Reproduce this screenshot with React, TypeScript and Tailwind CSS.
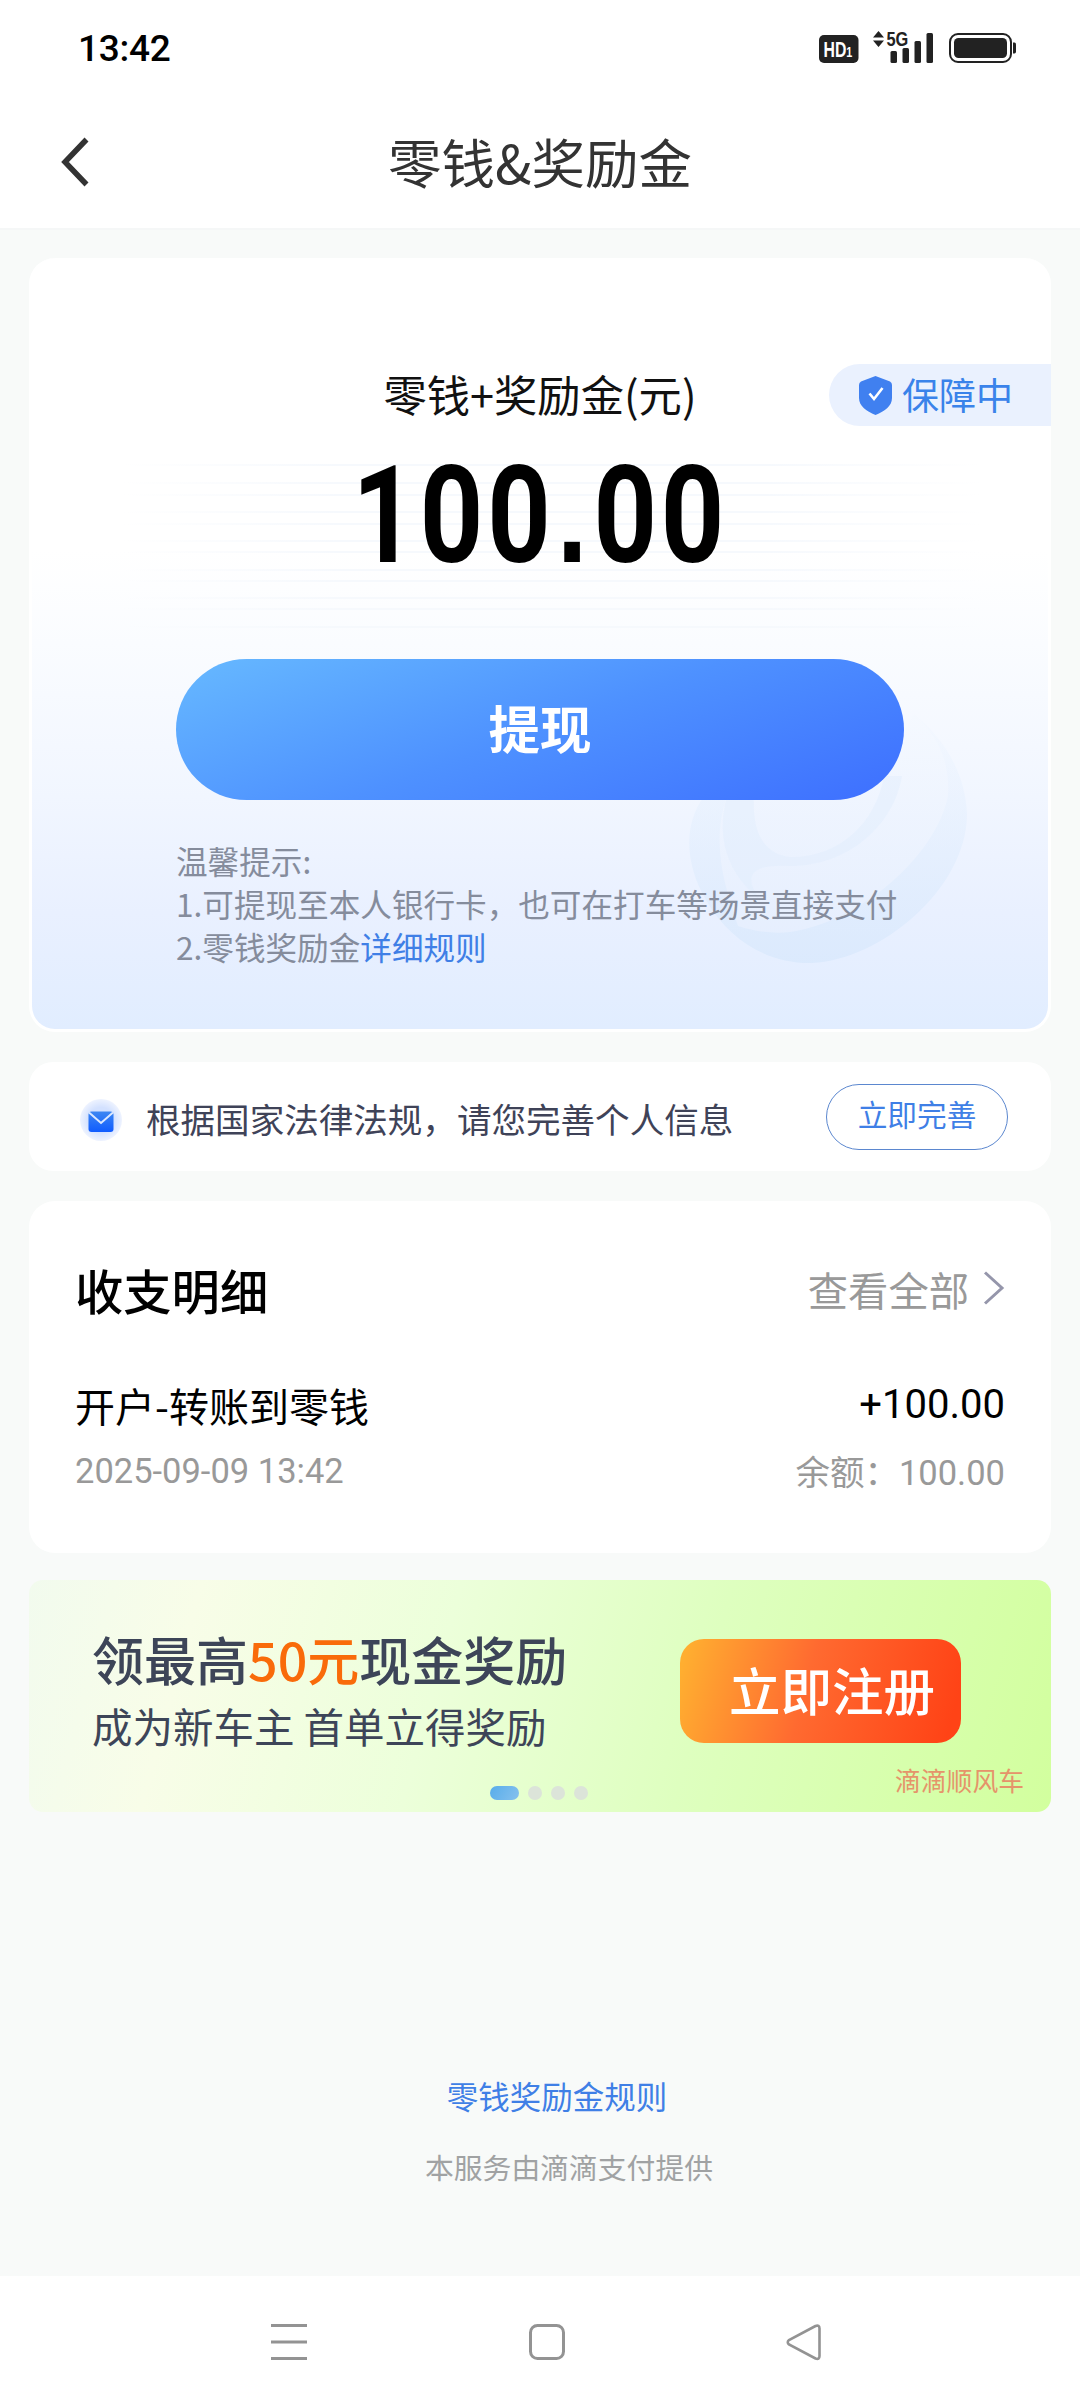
const stripes = [464, 482, 494, 511, 523, 540, 551, 569, 580, 597, 608, 626];

function StatusBar() {
  return (
    <div className="flex h-24 items-center justify-between pl-[78px] pr-16">
      <span className="mt-px font-['Roboto'] text-[37px] font-medium leading-none tracking-[-0.3px] text-black">13:42</span>
      <svg width="198" height="44" viewBox="818 26 198 44" className="text-[#222]" fill="currentColor">
        <rect x="819" y="35" width="39.5" height="28" rx="5" />
        <text transform="translate(823.500 57) scale(0.72 1)" fill="#fff" fontFamily="Liberation Sans" fontWeight="700" fontSize="22">HD<tspan fontSize="15">1</tspan></text>
        <path d="M873 37.500 878.500 31 884 37.500ZM873 40.500 884 40.500 878.500 47Z" />
        <text transform="translate(886.500 46) scale(0.8 1)" fontFamily="Liberation Sans" fontWeight="700" fontSize="20.500">5G</text>
        <rect x="890.500" y="51" width="6.500" height="12" rx="1.500" />
        <rect x="902.500" y="48" width="6.500" height="15" rx="1.500" />
        <rect x="914.500" y="41" width="6.500" height="22" rx="1.500" />
        <rect x="926.500" y="33" width="6.500" height="30" rx="1.500" />
        <rect x="950" y="34" width="61" height="28" rx="8" fill="none" stroke="currentColor" strokeWidth="2" />
        <rect x="954" y="38" width="53" height="20" rx="4.500" />
        <path d="M1013 42.500h1.500q1.500 0 1.500 2v7q0 2-1.500 2H1013z" />
      </svg>
    </div>
  );
}

function TitleBar() {
  return (
    <header className="relative flex h-[134px] items-center justify-center border-b-2 border-[#f5f7f7] pb-[2px]">
      <svg width="30" height="50" viewBox="0 0 30 50" className="absolute left-[60px] top-[41px]" fill="none" stroke="#333" strokeWidth="5.500">
        <path d="M26.500 2.500 5 25 26.500 47.500" />
      </svg>
      <h1 className="text-[53.500px] leading-none text-[#333]">零钱&amp;奖励金</h1>
    </header>
  );
}

function Swirl() {
  return (
    <svg width="290" height="270" viewBox="685 700 290 270" className="absolute left-[653px] top-[442px]">
      <defs>
        <linearGradient id="disc" x1="0" y1="0" x2="0" y2="1">
          <stop offset="0" stopColor="#e2effe" stopOpacity="0.1" />
          <stop offset="1" stopColor="#d8e8fc" stopOpacity="0.9" />
        </linearGradient>
        <linearGradient id="inner" x1="0" y1="0" x2="0" y2="1">
          <stop offset="0" stopColor="#f5f9ff" />
          <stop offset="1" stopColor="#e7effe" />
        </linearGradient>
      </defs>
      <path d="M704 796C684 824 684 862 706 900C730 942 770 964 812 963C880 960 966 890 967 815C966 774 944 738 914 714L880 780Z" fill="url(#disc)" opacity="0.85" />
      <path d="M727 796C712 840 722 880 738 926C756 932 775 934 790 932C860 922 936 856 948 796C950 764 940 738 914 714L880 780Z" fill="url(#inner)" opacity="0.9" />
      <path d="M727 796C716 836 726 872 760 900C742 874 752 864 790 866C850 866 894 824 902 776L884 776C876 824 838 858 790 857C762 854 752 830 754 796Z" fill="#deebfd" opacity="0.35" />
    </svg>
  );
}

function BalanceCard() {
  return (
    <section className="relative flex h-[774px] flex-col items-center rounded-[26px] border-x-[3px] border-b-[3px] border-white bg-[linear-gradient(180deg,#fff_0%,#fff_38%,#fafcff_50%,#f1f6ff_70%,#e9f0ff_85%,#e1edff_100%)]">
      {stripes.map((y) => (
        <div
          key={y}
          className="absolute left-[90px] h-[2px] w-[860px] bg-[linear-gradient(90deg,transparent,#f6f9fd_25%,#f6f9fd_75%,transparent)]"
          style={{ top: y - 258 }}
        />
      ))}
      <Swirl />
      <div className="absolute right-[-3px] top-[106px] flex h-[62px] w-[222px] items-center rounded-l-full bg-[#eaf1fe] pl-[30px]">
        <svg width="33" height="39" viewBox="0 0 33 39">
          <path d="M16.500 0 31 5.500Q33 6.500 33 9v13c0 8-7 13-16.500 17C7 35 0 30 0 22V9Q0 6.500 2 5.500Z" fill="#4080f0" />
          <path d="m10.500 17.500 4.500 5.500 8.500-11" fill="none" stroke="#fff" strokeWidth="2.600" />
        </svg>
        <span className="mb-[2px] ml-[10px] text-[37px] leading-none text-[#3a83ea]">保障中</span>
      </div>
      <p className="mt-[111px] text-[43.300px] leading-[48px] text-[#111]">零钱+奖励金(元)</p>
      <p className="mt-[29px] h-[140px] origin-center scale-x-[0.82] font-['Roboto'] text-[135px] font-bold leading-[140px] tracking-[4.800px] text-black">
        100<span className="px-[2.500px] font-['Liberation_Sans']">.</span>00
      </p>
      <button className="relative mt-[73px] h-[141px] w-[728px] shrink-0 rounded-full bg-[linear-gradient(160deg,#64b5ff_5%,#4e91ff_50%,#3f72ff_95%)] pb-[6px] text-[51.500px] font-bold leading-none text-white">提现</button>
      <div className="relative mt-[39px] w-[728px] whitespace-nowrap text-[31.600px] leading-[43px] text-[#858c9c]">
        <p>温馨提示:</p>
        <p>1.可提现至本人银行卡，也可在打车等场景直接支付</p>
        <p>2.零钱奖励金<a className="text-[#3f7fe6]">详细规则</a></p>
      </div>
    </section>
  );
}

function Notice() {
  return (
    <section className="mt-[30px] flex h-[109px] items-center rounded-[24px] bg-white pl-[50px] pr-[43px]">
      <svg width="44" height="44" viewBox="0 0 44 44" className="mt-[6px]">
        <defs>
          <radialGradient id="halo"><stop offset="0.600" stopColor="#d3e1ff" /><stop offset="1" stopColor="#eef3ff" /></radialGradient>
          <linearGradient id="mail" x1="0" y1="0" x2="0" y2="1"><stop offset="0" stopColor="#3d87f2" /><stop offset="1" stopColor="#105cff" /></linearGradient>
        </defs>
        <circle cx="22" cy="22" r="21" fill="url(#halo)" />
        <rect x="9.500" y="13.500" width="25" height="20.500" rx="3" fill="url(#mail)" />
        <path d="M10 14.500 22 25 34 14.500" fill="none" stroke="#dbe8ff" strokeWidth="2" />
      </svg>
      <span className="ml-[23px] mt-[3px] text-[34.550px] leading-none text-[#3f4358]">根据国家法律法规，请您完善个人信息</span>
      <button className="ml-auto flex h-[66px] w-[182px] items-center justify-center rounded-full border-[1.500px] border-[#5b87cf] pb-[5px] text-[29.700px] leading-none text-[#3f7fe6]">立即完善</button>
    </section>
  );
}

function Details() {
  return (
    <section className="mt-[30px] h-[352px] rounded-[26px] bg-white px-[46px] pt-[64px]">
      <div className="flex items-center justify-between">
        <h2 className="text-[48.300px] font-medium leading-[48px] text-black">收支明细</h2>
        <div className="flex items-center text-[40.300px] leading-[48px] text-[#999]">
          查看全部
          <svg width="22" height="34" viewBox="0 0 22 34" className="ml-[14px] mt-[-2px]" fill="none" stroke="#9596ab" strokeWidth="3">
            <path d="m2 1.500 17 15.500L2 32.500" />
          </svg>
        </div>
      </div>
      <div className="mt-[68px] flex justify-between text-[40px] leading-[48px] text-black">
        <span>开户-转账到零钱</span>
        <span className="font-['Roboto']">+100.00</span>
      </div>
      <div className="mt-[21px] flex justify-between font-['Roboto','Noto_Sans_CJK_SC',sans-serif] text-[34.500px] leading-[42px] text-[#999]">
        <span>2025-09-09 13:42</span>
        <span className="pt-[2px]">余额：100.00</span>
      </div>
    </section>
  );
}

function Banner() {
  return (
    <section className="relative mt-[27px] flex h-[232px] rounded-[14px] bg-[linear-gradient(105deg,#f2fbee_0%,#f8fde8_16%,#ecffda_40%,#deffbf_65%,#d2ff9e_100%)] pl-[63px]">
      <div className="pt-[53px] text-[#3d4558]">
        <p className="text-[52px] font-medium leading-[52px]">领最高<span className="text-[#f96b0a]">50元</span>现金奖励</p>
        <p className="mt-[21px] text-[40.500px] leading-[40px]">成为新车主 首单立得奖励</p>
      </div>
      <div className="absolute left-[651px] top-[59px] flex h-[104px] w-[281px] items-center rounded-[24px] bg-[linear-gradient(105deg,#ffae30_3%,#ff6a30_45%,#ff4316_95%)] pb-[4px] pl-[49px] text-[51.500px] font-medium leading-none text-white">立即注册</div>
      <span className="absolute right-[27px] top-[186px] text-[25.800px] leading-[28px] text-[#e5946a]">滴滴顺风车</span>
      <div className="absolute left-[461px] top-[206px] flex gap-[9px]">
        <i className="h-[14px] w-[29px] rounded-full bg-[linear-gradient(120deg,#58adea,#86c1ee)]" />
        <i className="size-[14px] rounded-full bg-[#dce4d9]" />
        <i className="size-[14px] rounded-full bg-[#dce4d9]" />
        <i className="size-[14px] rounded-full bg-[#dce4d9]" />
      </div>
    </section>
  );
}

function NavBar() {
  return (
    <nav className="flex h-[132px] items-start gap-[218px] bg-white pl-[269px] pt-[46px]">
      <svg width="40" height="40" fill="none" stroke="#939393" strokeWidth="3"><path d="M2 3.500h36M2 20h36M2 36.500h36" /></svg>
      <svg width="40" height="40" fill="none" stroke="#939393" strokeWidth="3"><rect x="3.500" y="3.500" width="33" height="33" rx="7" /></svg>
      <svg width="40" height="40" fill="none" stroke="#939393" strokeWidth="2.600"><path d="M30.500 4 4 18Q1.500 20 4 22.500L30.500 36.500Q34.500 38 34.500 34V6.500Q34.500 2.500 30.500 4Z" /></svg>
    </nav>
  );
}

export default function App() {
  return (
    <div className="flex h-[2408px] w-[1080px] flex-col overflow-hidden bg-[#f8faf9] font-['Noto_Sans_CJK_SC',sans-serif]">
      <div className="bg-white">
        <StatusBar />
        <TitleBar />
      </div>
      <main className="flex-1 px-[29px] pt-[28px]">
        <BalanceCard />
        <Notice />
        <Details />
        <Banner />
        <footer className="flex flex-col items-center pt-[262px]">
          <a className="ml-[34px] text-[31.500px] leading-[42px] text-[#3f7fe6]">零钱奖励金规则</a>
          <p className="ml-[58px] mt-[30px] text-[28.800px] leading-[42px] text-[#a0a2a3]">本服务由滴滴支付提供</p>
        </footer>
      </main>
      <NavBar />
    </div>
  );
}
